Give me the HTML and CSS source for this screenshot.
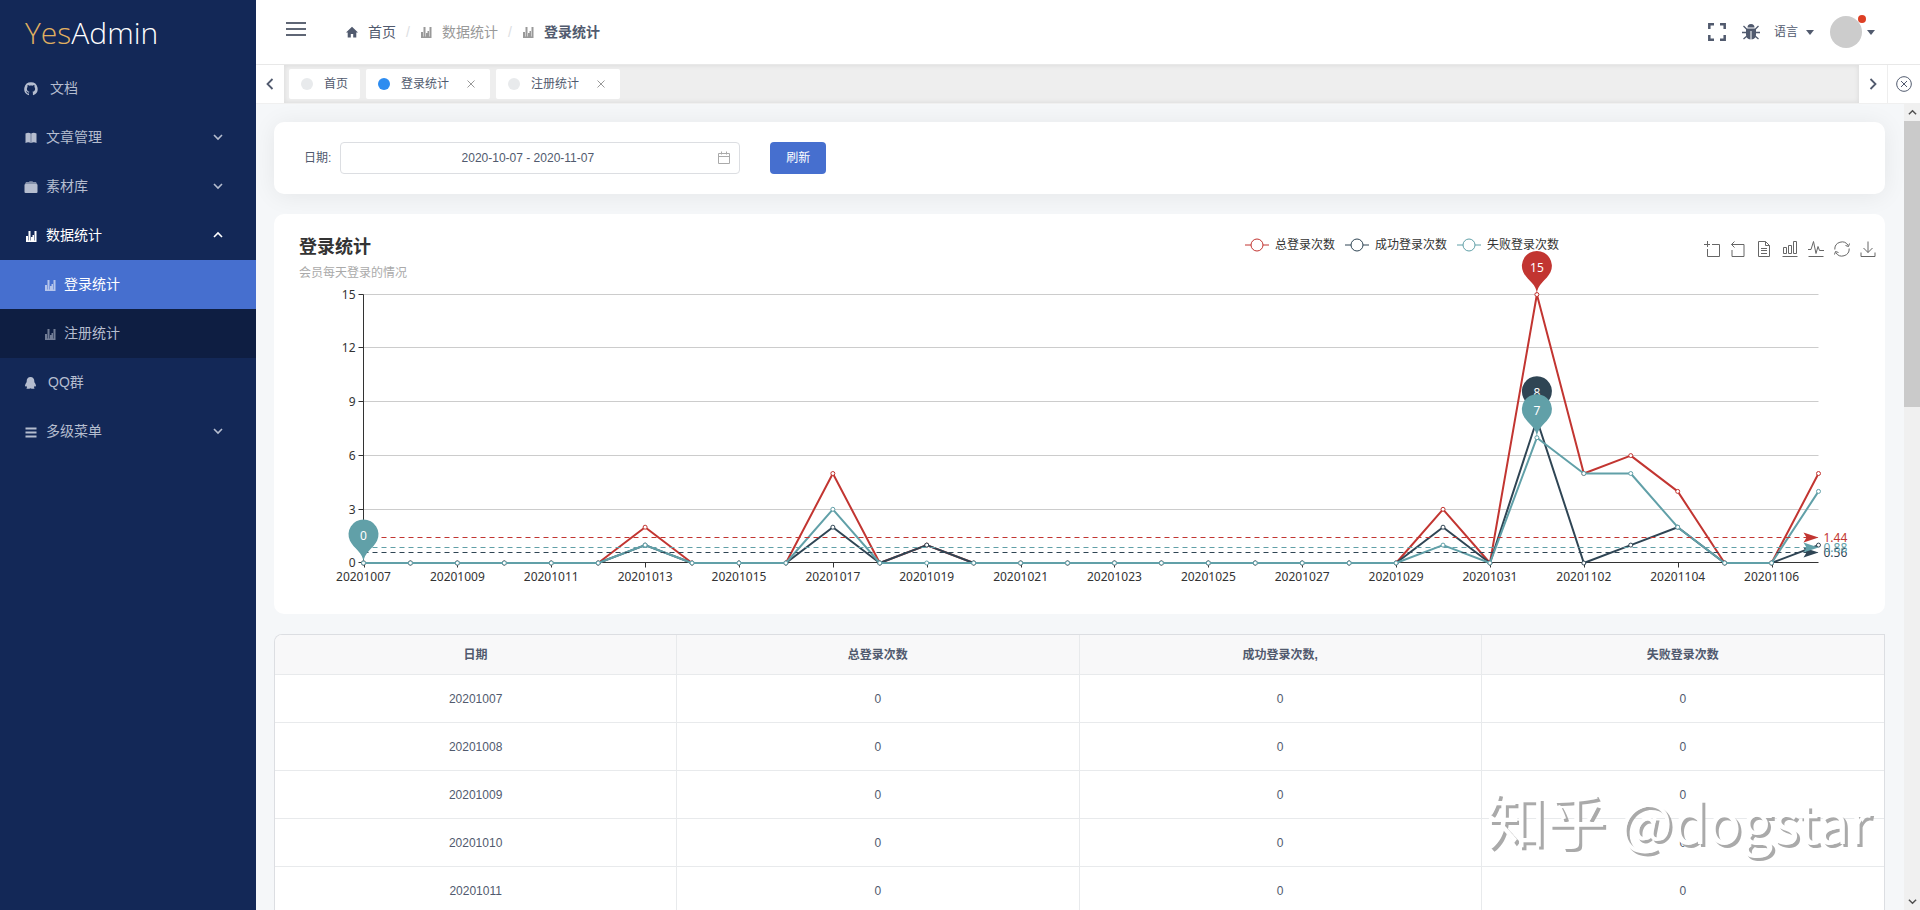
FILE: index.html
```html
<!DOCTYPE html>
<html lang="zh-CN">
<head>
<meta charset="utf-8">
<title>YesAdmin - 登录统计</title>
<link rel="stylesheet" href="styles.css">
</head>
<body>
<svg class="sprite" aria-hidden="true">
  <symbol id="i-bars" viewBox="0 0 12 12"><path fill="currentColor" d="M1 6h2v6H1zM3.500 1h2v11h-2zM6 7h1.500v5H6zM7.500 5h1.500v7H7.500zM9.500 1h2v11h-2zM1 10.500h10V12H1z"/></symbol>
  <symbol id="i-down" viewBox="0 0 10 10"><path fill="none" stroke="currentColor" stroke-width="1.600" d="M1 3l4 4 4-4"/></symbol>
  <symbol id="i-up" viewBox="0 0 10 10"><path fill="none" stroke="currentColor" stroke-width="1.600" d="M1 7l4-4 4 4"/></symbol>
  <symbol id="i-x" viewBox="0 0 8 8"><path fill="none" stroke="currentColor" stroke-width="1" d="M.5.5l7 7M7.500.5l-7 7"/></symbol>
  <symbol id="i-caret" viewBox="0 0 8 5"><path fill="currentColor" d="M0 0h8L4 5z"/></symbol>
</svg>
<div class="app">
  <aside class="side">
    <h1 class="logo"><span class="logo-gold">Yes</span>Admin</h1>
    <nav>
      <a class="item wide" href="#"><svg class="ico" viewBox="0 0 14 14"><path fill="currentColor" d="M7 .3a6.700 6.700 0 0 0-2.800 12.800c.5.200.8 0 .8-.4v-1.200c-1.500.2-2-.5-2.300-1.200-.2-.5-.5-.6-.8-.9.700-.3 1.200.1 1.600.7.500.7 1 .7 1.600.5.100-.4.200-.7.500-.9-1.800-.3-2.700-1.300-2.700-3 0-.7.200-1.300.7-1.800-.2-.6-.2-1.200.1-1.800.7 0 1.300.3 1.800.7 1-.3 2-.3 3 0 .500-.4 1.100-.7 1.800-.7.300.6.300 1.200.1 1.800.500.5.700 1.100.7 1.800 0 1.700-.9 2.700-2.700 3 .400.300.5.800.5 1.300v1.700c0 .4.300.6.800.4A6.700 6.700 0 0 0 7 .3z"/></svg>文档</a>
      <a class="item" href="#"><svg class="ico" viewBox="0 0 14 14"><path fill="currentColor" d="M1.500 2.500Q4.500 1 6.800 2.500V12q-2.500-1.400-5.300 0zM7.200 2.500Q9.500 1 12.500 2.500V12Q9.800 10.600 7.200 12z"/></svg>文章管理<svg class="arrow"><use href="#i-down"/></svg></a>
      <a class="item" href="#"><svg class="ico" viewBox="0 0 14 14"><path fill="currentColor" opacity=".7" d="M2 2h3l.5-.7h3L9 2h3l1 2H1z"/><rect x=".5" y="4" width="13" height="9" rx="1" fill="currentColor"/></svg>素材库<svg class="arrow"><use href="#i-down"/></svg></a>
      <a class="item open" href="#"><svg class="ico"><use href="#i-bars"/></svg>数据统计<svg class="arrow"><use href="#i-up"/></svg></a>
      <div class="sub">
        <a class="item current" href="#"><svg class="ico"><use href="#i-bars"/></svg>登录统计</a>
        <a class="item" href="#"><svg class="ico"><use href="#i-bars"/></svg>注册统计</a>
      </div>
      <a class="item qq" href="#"><svg class="ico" viewBox="0 0 14 14"><path fill="currentColor" d="M6.500 1c2.500 0 3.800 1.800 3.800 4 0 1 .2 1.300.8 2.300.7 1.200 1.100 2.600.7 3.200-.3.400-.8-.3-1.100-.7-.1.700-.4 1.200-.9 1.600 1 .3 1 1.300-.3 1.400-1.200.1-2.100-.1-3-.5-.9.400-1.800.6-3 .5-1.300-.1-1.300-1.100-.3-1.400-.5-.4-.8-.9-.9-1.600-.3.400-.8 1.100-1.100.7-.4-.6 0-2 .7-3.200.6-1 .8-1.300.8-2.300 0-2.200 1.300-4 3.800-4z"/></svg>QQ群</a>
      <a class="item" href="#"><svg class="ico" viewBox="0 0 14 14"><path stroke="currentColor" stroke-width="1.800" d="M1.500 3.500h11M1.500 7.500h11M1.500 11.500h11"/></svg>多级菜单<svg class="arrow"><use href="#i-down"/></svg></a>
    </nav>
  </aside>

  <div class="main">
    <header class="top">
      <button class="plain burger" aria-label="菜单"><svg width="20" height="14" viewBox="0 0 20 14"><path stroke="currentColor" stroke-width="2" d="M0 1h20M0 7h20M0 13h20"/></svg></button>
      <nav class="crumbs">
        <a href="#"><svg width="12" height="12" viewBox="0 0 12 12"><path fill="currentColor" d="M6 .8L12 6.400H10.300V11.500H7.200V8H4.800v3.500H1.700V6.400H0z"/></svg>首页</a>
        <span class="sep">/</span>
        <a class="mid" href="#"><svg width="12" height="12"><use href="#i-bars"/></svg>数据统计</a>
        <span class="sep">/</span>
        <a class="last" href="#"><svg width="12" height="12"><use href="#i-bars"/></svg>登录统计</a>
      </nav>
      <div class="tools">
        <button class="plain" aria-label="全屏"><svg width="18" height="18" viewBox="0 0 18 18"><path fill="none" stroke="currentColor" stroke-width="2.500" d="M1.300 6V1.300H6M12 1.300h4.700V6M16.700 12v4.700H12M6 16.700H1.300V12"/></svg></button>
        <button class="plain" aria-label="错误日志"><svg width="18" height="18" viewBox="0 0 18 18"><path fill="currentColor" d="M5.500 4.500a3.500 3.500 0 0 1 7 0zM4 5.500h10v6a5 5 0 0 1-4.500 5V8h-1v8.500a5 5 0 0 1-4.500-5z"/><path fill="none" stroke="currentColor" stroke-width="1.300" d="M1.500 3L4.500 6M16.500 3l-3 3M0 9.500h4.500M18 9.500h-4.500M1.500 16l3.500-3M16.500 16L13 13"/></svg></button>
        <button class="plain lang">语言<svg width="8" height="5"><use href="#i-caret"/></svg></button>
        <button class="plain user" aria-label="用户"><span class="avatar"><span class="dot"></span></span><svg width="8" height="5"><use href="#i-caret"/></svg></button>
      </div>
    </header>

    <div class="tabs">
      <button class="plain edge" aria-label="向左"><svg width="12" height="12" viewBox="0 0 12 12"><path fill="none" stroke="currentColor" stroke-width="1.800" d="M8.500 1l-5 5 5 5"/></svg></button>
      <div class="strip">
        <a class="tab" href="#"><i></i>首页</a>
        <a class="tab on" href="#"><i></i>登录统计<svg width="8" height="8"><use href="#i-x"/></svg></a>
        <a class="tab" href="#"><i></i>注册统计<svg width="8" height="8"><use href="#i-x"/></svg></a>
      </div>
      <button class="plain edge" aria-label="向右"><svg width="12" height="12" viewBox="0 0 12 12"><path fill="none" stroke="currentColor" stroke-width="1.800" d="M3.500 1l5 5-5 5"/></svg></button>
      <button class="plain edge close" aria-label="关闭"><svg width="16" height="16" viewBox="0 0 16 16"><path fill="none" stroke="currentColor" d="M8 .7a7.300 7.300 0 1 0 .01 0zM5 5l6 6M11 5l-6 6"/></svg></button>
    </div>

    <div class="body">
      <main class="content">
        <form class="card filter">
          <label for="range">日期:</label>
          <span class="field"><input id="range" type="text" value="2020-10-07 - 2020-11-07"><svg width="14" height="14" viewBox="0 0 14 14"><path fill="none" stroke="currentColor" d="M1.500 2.500h11v10h-11zM1.500 5.500h11M4.500.5v3M9.500.5v3"/></svg></span>
          <button type="button" class="primary">刷新</button>
        </form>

        <section class="card chart">
          <div class="chart-head">
            <div class="titles"><h2>登录统计</h2><p>会员每天登录的情况</p></div>
            <div class="legend">
              <button class="plain red"><svg width="24" height="14" viewBox="0 0 24 14"><path d="M0 7h24"/><circle cx="12" cy="7" r="6"/></svg>总登录次数</button>
              <button class="plain navy"><svg width="24" height="14" viewBox="0 0 24 14"><path d="M0 7h24"/><circle cx="12" cy="7" r="6"/></svg>成功登录次数</button>
              <button class="plain teal"><svg width="24" height="14" viewBox="0 0 24 14"><path d="M0 7h24"/><circle cx="12" cy="7" r="6"/></svg>失败登录次数</button>
            </div>
            <div class="toolbox">
              <button class="plain" aria-label="区域缩放"><svg viewBox="0 0 16 16"><path d="M0 3.500h6M3.500 0v6M8 3.500h7.500v12h-12V8"/></svg></button>
              <button class="plain" aria-label="缩放还原"><svg viewBox="0 0 16 16"><path d="M4.500.5l-3 3 3 3M1.500 3.500h12.500v12H2V9"/></svg></button>
              <button class="plain" aria-label="数据视图"><svg viewBox="0 0 16 16"><path d="M2.500.5h7l4 4v11h-11zM9.500.5v4h4M5 7.500h6M5 9.500h6M5 12.500h6"/></svg></button>
              <button class="plain" aria-label="柱状图"><svg viewBox="0 0 16 16"><path d="M.5 15.500h15M1.500 6.500h3v6h-3zM6.500 4.500h3v8h-3zM11.500.5h3v12h-3z"/></svg></button>
              <button class="plain" aria-label="折线图"><svg viewBox="0 0 16 16"><path d="M.5 15.500h15M0 8.500h3L5.500.5l2.500 12 2-7 1.500 4H16"/></svg></button>
              <button class="plain" aria-label="还原"><svg viewBox="0 0 16 16"><path d="M.8 8.500a7.200 7.200 0 0 1 13.400-4M15.200 7.500a7.200 7.200 0 0 1-13.400 4M15.500 2.500l-1 3-3-1M.5 13.500l1-3 3 1"/></svg></button>
              <button class="plain" aria-label="保存为图片"><svg viewBox="0 0 16 16"><path d="M1 11.500v4h14v-4M8 .5v11M3.500 7L8 11.500 12.500 7"/></svg></button>
            </div>
          </div>
          <svg class="plot" id="plot" role="img" aria-label="登录统计"></svg>
        </section>

        <div class="table-wrap">
          <table>
            <thead><tr><th>日期</th><th>总登录次数</th><th>成功登录次数,</th><th>失败登录次数</th></tr></thead>
            <tbody>
              <tr><td>20201007</td><td>0</td><td>0</td><td>0</td></tr>
              <tr><td>20201008</td><td>0</td><td>0</td><td>0</td></tr>
              <tr><td>20201009</td><td>0</td><td>0</td><td>0</td></tr>
              <tr><td>20201010</td><td>0</td><td>0</td><td>0</td></tr>
              <tr><td>20201011</td><td>0</td><td>0</td><td>0</td></tr>
            </tbody>
          </table>
        </div>
      </main>
      <div class="scroll" aria-hidden="true">
        <svg viewBox="0 0 10 10"><use href="#i-up"/></svg>
        <div class="track"><div class="thumb"></div></div>
        <svg viewBox="0 0 10 10"><use href="#i-down"/></svg>
      </div>
    </div>
  </div>
  <div class="mark"><span class="mark-cn">知乎 </span>@dogstar</div>
</div>
<script src="chart.js"></script>
</body>
</html>
```

FILE: styles.css
```css
* { box-sizing: border-box; }
body {
  margin: 0;
  font: 12px/1.5 "Liberation Sans", "Noto Sans CJK SC", sans-serif;
  color: #515a6e;
}
h1, h2, p { margin: 0; }
a { color: inherit; text-decoration: none; }
svg { display: block; flex: none; }
.sprite { position: absolute; width: 0; height: 0; }
.plain {
  border: 0;
  padding: 0;
  background: none;
  font: inherit;
  color: inherit;
  display: flex;
  align-items: center;
}
.app { display: flex; height: 100vh; overflow: hidden; position: relative; }

.side { width: 256px; flex: none; background: #132857; color: #b5bdcf; }
.logo {
  height: 64px;
  padding-left: 25px;
  font: 300 30px/66px "Open Sans", sans-serif;
  color: #fff;
}
.logo-gold { color: #e0b060; }
.item {
  display: flex;
  align-items: center;
  gap: 8px;
  height: 49px;
  padding: 0 33px 0 24px;
  font-size: 14px;
}
.item.wide { gap: 12px; }
.item.qq { gap: 10px; }
.ico { width: 14px; height: 14px; }
.arrow { width: 10px; height: 10px; margin: 0 0 2px auto; }
.open { color: #fff; }
.sub { background: #0e1e42; }
.sub .item { padding-left: 44px; }
.sub .ico { width: 12px; height: 12px; opacity: .6; }
.open .ico { width: 12px; height: 12px; margin: 0 1px; }
.sub .current { background: #466fcf; color: #fff; }

.main { flex: 1; min-width: 0; display: flex; flex-direction: column; }
.top {
  height: 64px;
  flex: none;
  display: flex;
  align-items: center;
  padding: 0 45px 0 30px;
}
.burger { padding-bottom: 6px; color: #5f6675; }
.crumbs { display: flex; align-items: center; margin-left: 40px; font-size: 14px; }
.crumbs a { display: flex; align-items: center; gap: 10px; }
.crumbs .sep { width: 24px; text-align: center; color: #dcdee2; }
.crumbs .mid { color: #999; }
.crumbs .last { font-weight: 700; }
.crumbs .mid svg, .crumbs .last svg { color: #999; }
.tools { margin-left: auto; display: flex; align-items: center; gap: 16px; }
.lang { gap: 8px; margin-left: -2px; }
.user { gap: 5px; }
.avatar { width: 32px; height: 32px; border-radius: 50%; background: #ccc; position: relative; }
.dot {
  position: absolute;
  top: -1px;
  right: -4px;
  width: 8px;
  height: 8px;
  border-radius: 50%;
  background: #dd3f24;
}

.tabs { height: 40px; flex: none; display: flex; border-top: 1px solid #e8e8e8; border-bottom: 1px solid #f0f0f0; }
.edge { width: 28px; justify-content: center; }
.close { width: 33px; border-left: 1px solid #eee; }
.strip {
  flex: 1;
  display: flex;
  align-items: center;
  gap: 6px;
  padding: 0 5px;
  background: #eee;
  box-shadow: inset 0 0 4px 1px #ddd;
}
.tab {
  display: flex;
  align-items: center;
  height: 30px;
  padding: 0 12px;
  background: #fff;
  border-radius: 2px;
}
.tab i { width: 12px; height: 12px; border-radius: 50%; background: #e8eaec; margin-right: 11px; }
.tab.on i { background: #2d8cf0; }
.tab svg { margin: 0 3px 0 18px; color: #999; }

.body { flex: 1; min-height: 0; display: flex; background: #f5f7f9; }
.content {
  flex: 1;
  min-width: 0;
  padding: 18px 19px 0 18px;
  display: flex;
  flex-direction: column;
  gap: 20px;
  overflow: hidden;
}
.card { background: #fff; border-radius: 10px; flex: none; }
.filter {
  display: flex;
  align-items: center;
  height: 72px;
  padding: 0 30px;
  box-shadow: 0 2px 24px rgba(0, 0, 0, .07);
}
.field { width: 400px; margin: 0 30px 0 9px; display: flex; align-items: center; position: relative; color: #aaa; }
.field input {
  width: 100%;
  height: 32px;
  padding: 0 32px 0 7px;
  border: 1px solid #dcdee2;
  border-radius: 4px;
  font: inherit;
  color: #515a6e;
  text-align: center;
}
.field svg { position: absolute; right: 9px; }
.primary {
  height: 32px;
  padding: 0 16px;
  border: 0;
  border-radius: 4px;
  background: #466fcf;
  color: #fff;
  font: inherit;
}

.chart { height: 400px; }
.chart-head { display: flex; height: 64px; padding: 18px 9px 0 25px; color: #333; }
.titles { flex: 1; }
.titles h2 { font-size: 18px; line-height: 30px; }
.titles p { line-height: 22px; color: #aaa; }
.legend { display: flex; align-items: flex-start; gap: 10px; margin-top: 4px; }
.legend button { gap: 6px; }
.legend svg { fill: #fff; stroke: currentColor; }
.red svg { color: #c23531; }
.navy svg { color: #2f4554; }
.teal svg { color: #61a0a8; }
.toolbox { display: flex; align-items: flex-start; gap: 10px; margin: 9px 0 0 145px; }
.toolbox svg { width: 16px; height: 16px; fill: none; stroke: #666; }
.plot { width: 100%; height: 336px; overflow: visible; font: 12px "Noto Sans", sans-serif; }

.table-wrap { flex: none; border: 1px solid #dcdee2; border-bottom: 0; border-radius: 8px 0 0 0; overflow: hidden; background: #fff; }
table { width: 100%; border-collapse: separate; border-spacing: 0; table-layout: fixed; text-align: center; }
th, td { padding: 0; border-right: 1px solid #e8eaec; border-bottom: 1px solid #e8eaec; }
th:last-child, td:last-child { border-right: 0; }
th { height: 40px; background: #f8f8f9; }
td { height: 48px; }

.scroll {
  width: 16px;
  flex: none;
  display: flex;
  flex-direction: column;
  align-items: center;
  background: #f0f0f0;
  color: #505050;
}
.scroll svg { width: 9px; height: 17px; }
.track { flex: 1; width: 100%; }
.thumb { height: 37%; background: #cacaca; }

.mark {
  position: absolute;
  right: 49px;
  bottom: 48px;
  font: 56px/84px "Noto Sans CJK SC", sans-serif;
  color: #fff;
  text-shadow: 3px 3px 0 #aaa;
  pointer-events: none;
}
.mark-cn { font-size: 60px; }
```

FILE: chart.js
```js
const DAYS = 32;
const fill = points => Array.from({ length: DAYS }, (_, i) => points[i] || 0);
const series = [
  { color: '#c23531', data: fill({ 6: 2, 10: 5, 12: 1, 23: 3, 25: 15, 26: 5, 27: 6, 28: 4, 31: 5 }) },
  { color: '#2f4554', data: fill({ 6: 1, 10: 2, 12: 1, 23: 2, 25: 8, 27: 1, 28: 2, 31: 1 }) },
  { color: '#61a0a8', data: fill({ 6: 1, 10: 3, 23: 1, 25: 7, 26: 5, 27: 5, 28: 2, 31: 4 }) }
];
const plot = document.getElementById('plot');

function dayLabel(i) {
  const d = new Date(Date.UTC(2020, 9, 7 + i));
  return d.toISOString().slice(0, 10).replace(/-/g, '');
}

// Marker drop whose tip sits on (x, y): a circle of radius 15 with a tapering tail.
function pin(x, y, color, label) {
  const r = 15, h = 50, dy = r * r / (h - r), cy = y - h + r + dy;
  const a = Math.asin(dy / r), dx = Math.cos(a) * r;
  const sx = Math.sin(a) * r * 0.6, sy = Math.cos(a) * r * 0.6, b = cy + dy;
  return `<path fill="${color}" d="M${x - dx} ${b}A${r} ${r} 0 1 1 ${x + dx} ${b}` +
    `C${x + dx - sx} ${b + sy} ${x} ${y - r * 0.7} ${x} ${y}` +
    `C${x} ${y - r * 0.7} ${x - dx + sx} ${b + sy} ${x - dx} ${b}"/>` +
    `<text x="${x}" y="${cy + 6}" fill="#fff" text-anchor="middle">${label}</text>`;
}

function draw() {
  const left = 89.5, right = plot.clientWidth - 66.5, top = 16.5, bottom = 285;
  const px = i => left + (right - left) * i / (DAYS - 1);
  const py = v => bottom - (bottom - top) * v / 15;
  let out = '';
  for (let v = 0; v <= 15; v += 3) {
    const y = Math.floor(py(v) - 0.2) + 0.5;
    if (v) out += `<path stroke="#ccc" d="M${left} ${y}H${right}"/>`;
    out += `<path stroke="#333" d="M${left - 5} ${y}h5"/>`;
    out += `<text x="${left - 8}" y="${y + 4}" fill="#333" text-anchor="end">${v}</text>`;
  }
  const base = Math.floor(bottom - 0.2) + 0.5;
  out += `<path fill="none" stroke="#333" d="M${left} ${top}V${base}H${right}"/>`;
  for (let i = 0; i < DAYS; i += 2) {
    out += `<path stroke="#333" d="M${Math.round(px(i)) + 0.5} ${base}v5"/>`;
    out += `<text x="${px(i)}" y="${base + 18}" fill="#333" text-anchor="middle">${dayLabel(i)}</text>`;
  }
  for (const s of series) {
    out += `<polyline fill="none" stroke="${s.color}" stroke-width="2" stroke-linejoin="bevel" points="${s.data.map((v, i) => px(i) + ',' + py(v)).join(' ')}"/>`;
    out += s.data.map((v, i) => `<circle cx="${px(i)}" cy="${py(v)}" r="2" fill="#fff" stroke="${s.color}"/>`).join('');
  }
  for (const s of series) {
    const max = Math.max(...s.data), at = s.data.indexOf(max);
    out += pin(px(at), py(max), s.color, max);
    const mean = s.data.reduce((a, b) => a + b) / DAYS;
    const y = Math.floor(py(mean)) + 0.5;
    out += `<path stroke="${s.color}" stroke-dasharray="5 4" d="M${left} ${y}H${right}"/>`;
    out += `<path fill="${s.color}" d="M${right} ${y}l-15 5 3-5-3-5z"/>`;
    out += `<text x="${right + 5}" y="${y + 4}" fill="${s.color}">${mean.toFixed(2)}</text>`;
  }
  // All minimums fall on the first day, so only the topmost marker is visible.
  out += pin(px(0), py(0), series[2].color, 0);
  plot.innerHTML = out;
}

draw();
window.addEventListener('resize', draw);
```
